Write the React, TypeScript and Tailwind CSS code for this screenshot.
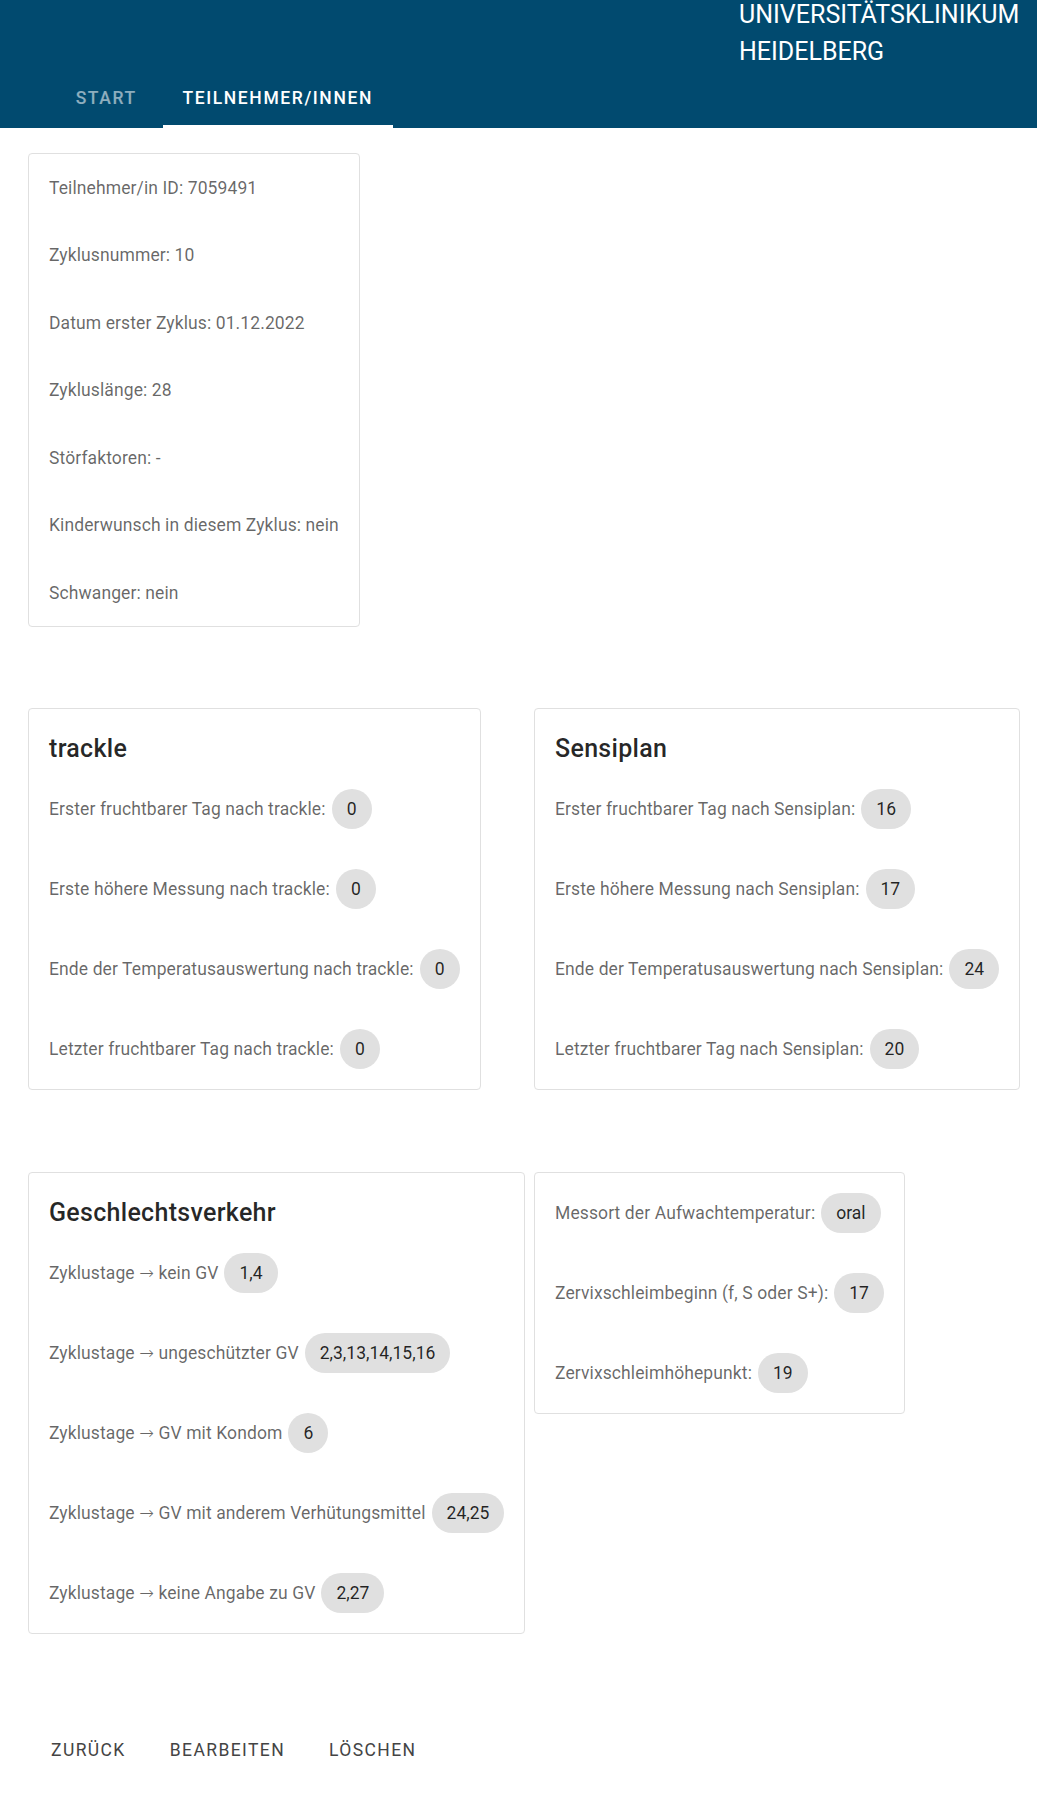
import React from 'react'

type Row = { label: string; value: string }

const info = [
  'Teilnehmer/in ID: 7059491',
  'Zyklusnummer: 10',
  'Datum erster Zyklus: 01.12.2022',
  'Zykluslänge: 28',
  'Störfaktoren: -',
  'Kinderwunsch in diesem Zyklus: nein',
  'Schwanger: nein',
]

const trackle: Row[] = [
  { label: 'Erster fruchtbarer Tag nach trackle:', value: '0' },
  { label: 'Erste höhere Messung nach trackle:', value: '0' },
  { label: 'Ende der Temperatusauswertung nach trackle:', value: '0' },
  { label: 'Letzter fruchtbarer Tag nach trackle:', value: '0' },
]

const sensiplan: Row[] = [
  { label: 'Erster fruchtbarer Tag nach Sensiplan:', value: '16' },
  { label: 'Erste höhere Messung nach Sensiplan:', value: '17' },
  { label: 'Ende der Temperatusauswertung nach Sensiplan:', value: '24' },
  { label: 'Letzter fruchtbarer Tag nach Sensiplan:', value: '20' },
]

const gv: Row[] = [
  { label: 'kein GV', value: '1,4' },
  { label: 'ungeschützter GV', value: '2,3,13,14,15,16' },
  { label: 'GV mit Kondom', value: '6' },
  { label: 'GV mit anderem Verhütungsmittel', value: '24,25' },
  { label: 'keine Angabe zu GV', value: '2,27' },
]

const messung: Row[] = [
  { label: 'Messort der Aufwachtemperatur:', value: 'oral' },
  { label: 'Zervixschleimbeginn (f, S oder S+):', value: '17' },
  { label: 'Zervixschleimhöhepunkt:', value: '19' },
]

function ChipRows({ rows, arrow }: { rows: Row[]; arrow?: boolean }) {
  return (
    <div className="flex flex-col gap-10">
      {rows.map((r) => (
        <div key={r.label} className="flex h-10 items-center whitespace-nowrap">
          <span className="text-[17.5px] leading-[25px] tracking-[0.006em] text-black/60">
            {arrow ? (
              <>
                Zyklustage <span className="font-light" style={{ fontFamily: '"DejaVu Sans", sans-serif' }}>→</span> {r.label}
              </>
            ) : (
              r.label
            )}
          </span>
          <span className="ml-1.5 flex h-10 min-w-10 items-center justify-center rounded-full bg-[#e0e0e0] px-[15px] text-[17.5px] text-black/85">
            {r.value}
          </span>
        </div>
      ))}
    </div>
  )
}

function Card({ title, rows, arrow }: { title?: string; rows: Row[]; arrow?: boolean }) {
  return (
    <div className="w-max rounded border border-[#e0e0e0] bg-white p-5">
      {title && (
        <h2 className="mb-5 text-[25px] font-medium leading-10 tracking-[0.012em] text-black/85">{title}</h2>
      )}
      <ChipRows rows={rows} arrow={arrow} />
    </div>
  )
}

export default function App() {
  return (
    <div className="min-h-[1812px] bg-white" style={{ fontFamily: 'Roboto, "Noto Sans", sans-serif' }}>
      <header className="flex h-[128px] flex-col bg-[#014a6f]">
        <div className="flex h-[68px] justify-end">
          <div className="-mt-[4px] w-[298px] text-[25px] leading-[37px] text-white">
            <div>UNIVERSITÄTSKLINIKUM</div>
            <div>HEIDELBERG</div>
          </div>
        </div>
        <nav className="ml-[50px] flex h-[60px]">
          <button className="relative flex min-w-[112.5px] items-center justify-center px-5 text-[17.5px] font-medium uppercase tracking-[1.6px] text-white/55">
            Start
          </button>
          <button className="relative flex items-center justify-center px-5 text-[17.5px] font-medium uppercase tracking-[1.6px] text-white">
            Teilnehmer/innen
            <span className="absolute bottom-0 left-0 right-0 h-[3px] bg-white" />
          </button>
        </nav>
      </header>

      <main className="pl-[28px] pt-[25px]">
        <div className="w-max rounded border border-[#e0e0e0] px-5 pb-[20.5px] pt-[21.5px]">
          <div className="flex flex-col gap-[42.5px]">
            {info.map((t) => (
              <p key={t} className="text-[17.5px] leading-[25px] tracking-[0.006em] text-black/60">
                {t}
              </p>
            ))}
          </div>
        </div>

        <div className="mt-[81px] grid grid-cols-[484px_484px] items-start gap-x-[22px] gap-y-[82px]">
          <Card title="trackle" rows={trackle} />
          <Card title="Sensiplan" rows={sensiplan} />
          <Card title="Geschlechtsverkehr" rows={gv} arrow />
          <Card rows={messung} />
        </div>

        <div className="mt-[93px] flex gap-[24px] pl-[13px]">
          {['Zurück', 'Bearbeiten', 'Löschen'].map((b) => (
            <button
              key={b}
              className="px-[10px] py-[7.5px] text-[17.5px] font-normal uppercase leading-[1.75] tracking-[0.08em] text-[#444]"
            >
              {b}
            </button>
          ))}
        </div>
      </main>
    </div>
  )
}
